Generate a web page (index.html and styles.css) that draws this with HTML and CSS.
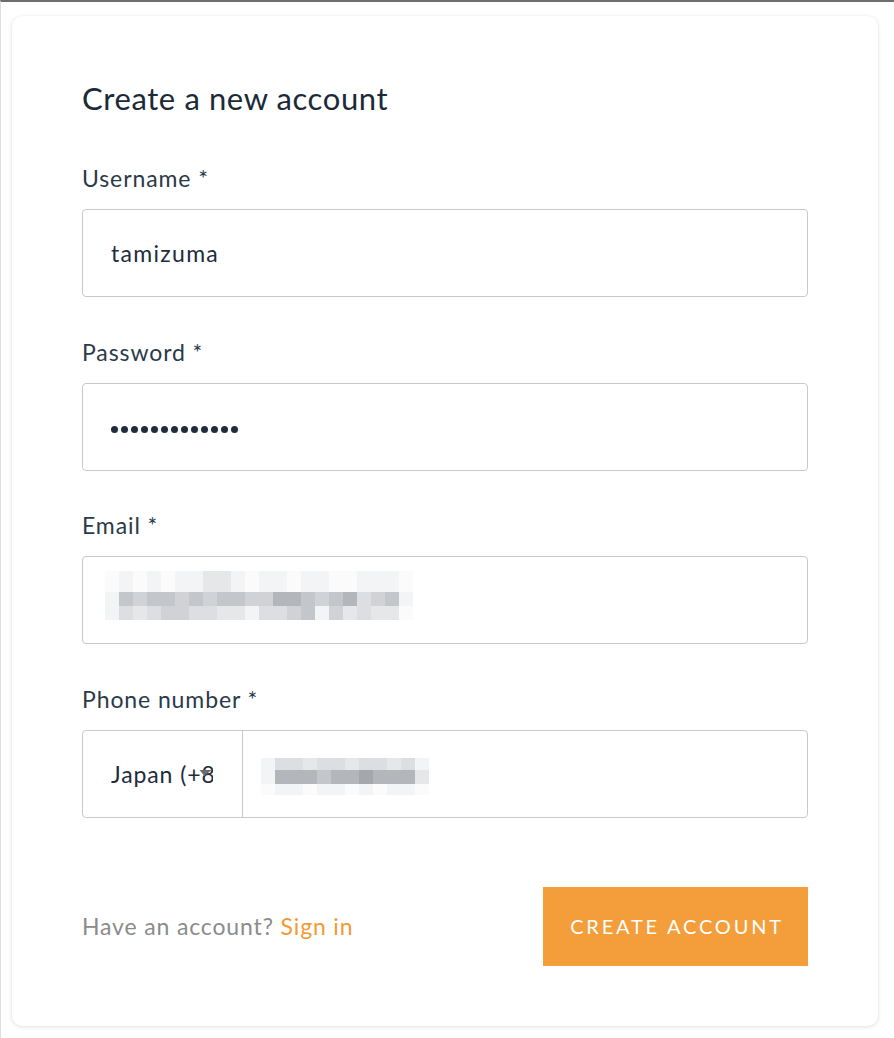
FILE: index.html
```html
<!DOCTYPE html>
<html lang="en">
<head>
<meta charset="utf-8">
<title>Create a new account</title>
<link rel="stylesheet" href="styles.css">
</head>
<body>
<div class="page">
  <div class="card">
    <h1 class="title">Create a new account</h1>

    <div class="field">
      <div class="label">Username *</div>
      <div class="input"><span class="value">tamizuma</span></div>
    </div>

    <div class="field">
      <div class="label">Password *</div>
      <div class="input">
        <div class="dots">
          <i></i><i></i><i></i><i></i><i></i><i></i><i></i><i></i><i></i><i></i><i></i><i></i><i></i>
        </div>
      </div>
    </div>

    <div class="field">
      <div class="label">Email *</div>
      <div class="input">
        <div class="mosaic email">
          <div class="mrow r1"><i class="s0"></i><i class="s1"></i><i class="s0"></i><i class="s1"></i><i class="s0"></i><i class="s1"></i><i class="s1"></i><i class="s2"></i><i class="s2"></i><i class="s1"></i><i class="s0"></i><i class="s1"></i><i class="s1"></i><i class="s0"></i><i class="s1"></i><i class="s1"></i><i class="s0"></i><i class="s0"></i><i class="s1"></i><i class="s1"></i><i class="s1"></i><i class="s0"></i></div>
          <div class="mrow r2"><i class="s1"></i><i class="s5"></i><i class="s4"></i><i class="s5"></i><i class="s5"></i><i class="s4"></i><i class="s5"></i><i class="s4"></i><i class="s5"></i><i class="s5"></i><i class="s4"></i><i class="s4"></i><i class="s6"></i><i class="s6"></i><i class="s5"></i><i class="s4"></i><i class="s5"></i><i class="s6"></i><i class="s3"></i><i class="s4"></i><i class="s5"></i><i class="s1"></i></div>
          <div class="mrow r3"><i class="s1"></i><i class="s3"></i><i class="s2"></i><i class="s3"></i><i class="s4"></i><i class="s4"></i><i class="s3"></i><i class="s3"></i><i class="s2"></i><i class="s2"></i><i class="s1"></i><i class="s3"></i><i class="s3"></i><i class="s4"></i><i class="s5"></i><i class="s1"></i><i class="s4"></i><i class="s2"></i><i class="s3"></i><i class="s2"></i><i class="s2"></i><i class="s0"></i></div>
        </div>
      </div>
    </div>

    <div class="field field-last">
      <div class="label">Phone number *</div>
      <div class="input phone">
        <div class="country">
          <span class="country-text">Japan (+81)</span>
          <span class="arrow"></span>
        </div>
        <div class="number">
          <div class="mosaic tel">
            <div class="mrow p1"><i class="s1"></i><i class="s3"></i><i class="s3"></i><i class="s2"></i><i class="s3"></i><i class="s3"></i><i class="s2"></i><i class="s3"></i><i class="s3"></i><i class="s2"></i><i class="s3"></i><i class="s1"></i></div>
            <div class="mrow p2"><i class="s1"></i><i class="s6"></i><i class="s6"></i><i class="s6"></i><i class="s5"></i><i class="s6"></i><i class="s6"></i><i class="s7"></i><i class="s6"></i><i class="s6"></i><i class="s6"></i><i class="s2"></i></div>
            <div class="mrow p3"><i class="s0"></i><i class="s1"></i><i class="s1"></i><i class="s0"></i><i class="s1"></i><i class="s1"></i><i class="s0"></i><i class="s1"></i><i class="s0"></i><i class="s1"></i><i class="s1"></i><i class="s0"></i></div>
          </div>
        </div>
      </div>
    </div>

    <div class="footer">
      <div class="signin">Have an account? <a class="link" href="#">Sign in</a></div>
      <button class="btn" type="button">CREATE ACCOUNT</button>
    </div>
  </div>
</div>
</body>
</html>
```

FILE: styles.css
```css
* { box-sizing: border-box; }

html, body {
  margin: 0;
  padding: 0;
  background: #ffffff;
}

body {
  font-family: "Lato", "Noto Sans", "Liberation Sans", sans-serif;
  color: #1e2c3b;
  border-top: 2px solid #6e6e6e;
  border-left: 1px solid #dedede;
  min-height: 1038px;
}

.page {
  padding: 14px 15px 12px 11px;
}

.card {
  width: 866px;
  height: 1010px;
  background: #ffffff;
  border-radius: 10px;
  box-shadow: 0 1px 4px rgba(0, 0, 0, 0.13), 0 0 1px rgba(0, 0, 0, 0.06);
  padding: 64px 70px 61px 70px;
  display: flex;
  flex-direction: column;
}

.title {
  margin: 0 0 50px 0;
  font-size: 31px;
  line-height: 36px;
  font-weight: 400;
  color: #1b2a39;
  letter-spacing: 0.6px;
}

.field {
  display: flex;
  flex-direction: column;
  margin-bottom: 42.67px;
}

.field-last {
  margin-bottom: 69px;
}

.label {
  font-size: 23px;
  line-height: 24px;
  letter-spacing: 0.9px;
  color: #2b3a49;
  margin-bottom: 19px;
}

.input {
  height: 88px;
  border: 1px solid #c9c9c9;
  border-radius: 4px;
  display: flex;
  align-items: center;
  padding: 0 28px;
  background: #fff;
}

.value {
  font-size: 23px;
  letter-spacing: 1.3px;
  color: #1e2c3b;
}

.dots {
  display: flex;
  gap: 3px;
  padding-top: 5px;
}

.dots i {
  display: block;
  width: 7px;
  height: 7px;
  border-radius: 50%;
  background: #1e2c3b;
}

.mosaic {
  display: flex;
  flex-direction: column;
}

.mrow {
  display: flex;
}

.mrow i {
  display: block;
  width: 14px;
}

.email {
  margin-left: -6px;
  padding-bottom: 10px;
}

.r1 i { height: 21px; }
.r2 i { height: 14px; }
.r3 i { height: 14px; }

.p1 i { height: 12px; }
.p2 i { height: 14px; }
.p3 i { height: 11px; }

.s0 { background: #fbfbfc; }
.s1 { background: #f3f4f5; }
.s2 { background: #e6e7e9; }
.s3 { background: #dcdee1; }
.s4 { background: #d0d2d6; }
.s5 { background: #c3c6ca; }
.s6 { background: #b3b6ba; }
.s7 { background: #a4a7ac; }

.phone {
  padding: 0;
}

.country {
  width: 160px;
  height: 100%;
  border-right: 1px solid #c9c9c9;
  display: flex;
  align-items: center;
  padding-left: 28px;
  position: relative;
}

.country-text {
  display: block;
  width: 102px;
  overflow: hidden;
  white-space: nowrap;
  font-size: 23px;
  letter-spacing: 0.9px;
  color: #1e2c3b;
}

.arrow {
  position: absolute;
  left: 116px;
  top: 39px;
  width: 0;
  height: 0;
  border-left: 6px solid transparent;
  border-right: 6px solid transparent;
  border-top: 6px solid #6b6b6b;
  transform: skewX(-10deg);
}

.number {
  flex: 1;
  height: 100%;
  display: flex;
  align-items: center;
  padding-left: 18px;
}

.tel {
  margin-top: 6px;
}

.footer {
  display: flex;
  justify-content: space-between;
  align-items: center;
}

.signin {
  font-size: 23px;
  letter-spacing: 0.85px;
  color: #8b8b8b;
}

.link {
  color: #f29a33;
  text-decoration: none;
}

.btn {
  width: 265px;
  height: 79px;
  border: none;
  border-radius: 0;
  background: #f39e3b;
  color: #ffffff;
  font-family: "Lato", "Noto Sans", "Liberation Sans", sans-serif;
  font-size: 20px;
  letter-spacing: 2.8px;
  font-weight: 400;
  cursor: pointer;
  padding: 0 0 0 3px;
}
```
